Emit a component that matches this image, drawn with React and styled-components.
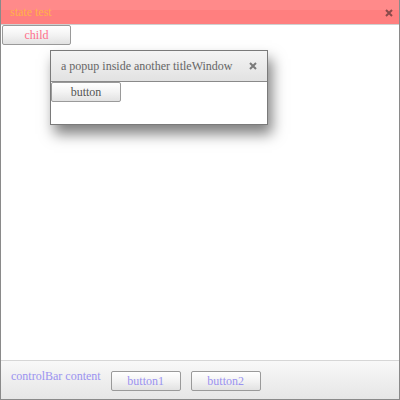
import React from "react";
import styled, { createGlobalStyle } from "styled-components";

const Global = createGlobalStyle`
  html, body { margin: 0; padding: 0; background: #fff; }
  body { font-family: "Liberation Serif", "Times New Roman", serif; }
`;

const Window = styled.div`
  box-sizing: border-box;
  width: 400px;
  height: 400px;
  border: 1px solid #8a8a8a;
  border-top: none;
  display: flex;
  flex-direction: column;
  background: #fff;
`;

const TitleBar = styled.div`
  box-sizing: border-box;
  height: ${(p) => p.$h}px;
  flex: none;
  display: flex;
  align-items: center;
  justify-content: space-between;
  padding: ${(p) => p.$pt || 0}px ${(p) => p.$pr}px 0 ${(p) => p.$pl}px;
  background: ${(p) => p.$bg};
  border-bottom: 1px solid ${(p) => p.$line};
  font-size: 12px;
  color: ${(p) => p.$color};
`;

const CloseIcon = ({ color }) => (
  <svg width="8" height="8" viewBox="0 0 8 8" style={{ display: "block" }}>
    <path d="M1 1L7 7M7 1L1 7" stroke={color} strokeWidth="2" strokeLinecap="butt" />
  </svg>
);

const Content = styled.div`
  flex: 1;
  position: relative;
`;

const Button = styled.button`
  box-sizing: border-box;
  width: ${(p) => p.$w || 69}px;
  height: 20px;
  padding: 0;
  margin: 0 0 0 ${(p) => p.$ml || 0}px;
  border: 1px solid #9a9a9a;
  border-radius: 2px;
  background: linear-gradient(#ffffff, #f3f3f3 50%, #e2e2e2);
  font-family: "Liberation Serif", "Times New Roman", serif;
  font-size: 12px;
  color: ${(p) => p.$color || "#555"};
  display: block;
`;

const Popup = styled.div`
  position: absolute;
  left: 49px;
  top: 25px;
  box-sizing: border-box;
  width: 218px;
  height: 75px;
  border: 1px solid #7a7a7a;
  background: #fff;
  box-shadow: 4px 9px 13px rgba(0, 0, 0, 0.5);
  display: flex;
  flex-direction: column;
`;

const ControlBar = styled.div`
  box-sizing: border-box;
  height: 39px;
  flex: none;
  border-top: 1px solid #d6d6d6;
  background: linear-gradient(#f8f8f8, #e6e6e6);
  display: flex;
  align-items: flex-start;
  padding: 8px 0 0 10px;
  gap: 10px;
`;

const BarLabel = styled.span`
  font-size: 12px;
  color: #9b93f0;
  line-height: 14px;
`;

const BarButtonWrap = styled.div`
  padding-top: 2px;
`;

export default function App() {
  return (
    <>
      <Global />
      <Window>
        <TitleBar
          $h={25}
          $pt={1}
          $pl={9}
          $pr={6}
          $bg="linear-gradient(#ff8a8a, #ff8a8a 40%, #ff7f7f 41%, #ff7f7f)"
          $line="#d0d0d0"
          $color="#ffb24a"
        >
          <span>state test</span>
          <CloseIcon color="#8a4a4a" />
        </TitleBar>
        <Content>
          <Button $color="#ff6f8a" $ml={1}>child</Button>
          <Popup>
            <TitleBar
              $h={31}
              $pl={10}
              $pr={10}
              $bg="linear-gradient(#f4f4f4, #e2e2e2)"
              $line="#8a8a8a"
              $color="#666"
            >
              <span>a popup inside another titleWindow</span>
              <CloseIcon color="#7a7a7a" />
            </TitleBar>
            <Button $w={70}>button</Button>
          </Popup>
        </Content>
        <ControlBar>
          <BarLabel>controlBar content</BarLabel>
          <BarButtonWrap>
            <Button $w={70} $color="#9b93f0">button1</Button>
          </BarButtonWrap>
          <BarButtonWrap>
            <Button $w={70} $color="#9b93f0">button2</Button>
          </BarButtonWrap>
        </ControlBar>
      </Window>
    </>
  );
}
